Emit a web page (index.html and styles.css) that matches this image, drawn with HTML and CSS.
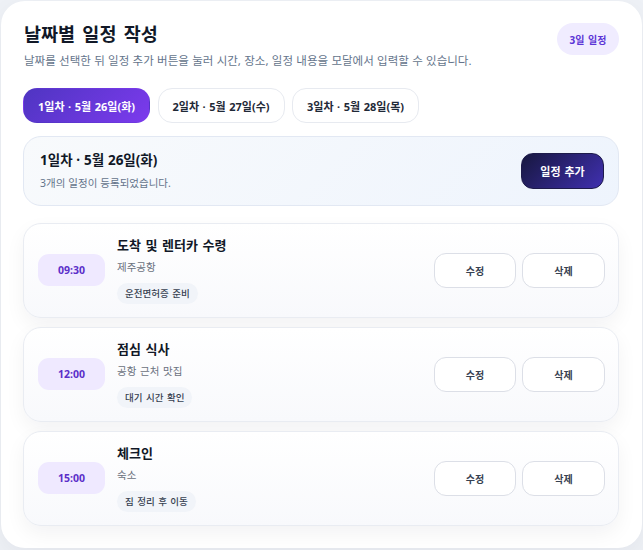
FILE: index.html
```html
<!DOCTYPE html>
<html lang="ko">
<head>
<meta charset="utf-8">
<title>날짜별 일정 작성</title>
<link rel="stylesheet" href="styles.css">
</head>
<body>
<main class="shell">
  <header class="head">
    <div>
      <h1 class="title">날짜별 일정 작성</h1>
      <p class="sub">날짜를 선택한 뒤 일정 추가 버튼을 눌러 시간, 장소, 일정 내용을 모달에서 입력할 수 있습니다.</p>
    </div>
    <span class="count">3일 일정</span>
  </header>
  <nav class="tabs">
    <button class="tab tab-on">1일차 · 5월 26일(화)</button>
    <button class="tab">2일차 · 5월 27일(수)</button>
    <button class="tab">3일차 · 5월 28일(목)</button>
  </nav>
  <section class="panel">
    <div class="panel-text">
      <h2 class="panel-title">1일차 · 5월 26일(화)</h2>
      <p class="panel-sub">3개의 일정이 등록되었습니다.</p>
    </div>
    <button class="add">일정 추가</button>
  </section>
  <section class="list">
    <article class="item">
      <div class="time">09:30</div>
      <div class="info">
        <h3 class="name">도착 및 렌터카 수령</h3>
        <p class="place">제주공항</p>
        <span class="memo">운전면허증 준비</span>
      </div>
      <div class="acts"><button class="act">수정</button><button class="act act-del">삭제</button></div>
    </article>
    <article class="item">
      <div class="time">12:00</div>
      <div class="info">
        <h3 class="name">점심 식사</h3>
        <p class="place">공항 근처 맛집</p>
        <span class="memo">대기 시간 확인</span>
      </div>
      <div class="acts"><button class="act">수정</button><button class="act act-del">삭제</button></div>
    </article>
    <article class="item">
      <div class="time">15:00</div>
      <div class="info">
        <h3 class="name">체크인</h3>
        <p class="place">숙소</p>
        <span class="memo">짐 정리 후 이동</span>
      </div>
      <div class="acts"><button class="act">수정</button><button class="act act-del">삭제</button></div>
    </article>
  </section>
</main>
</body>
</html>
```
FILE: styles.css
```css
* { box-sizing: border-box; }
html, body { margin: 0; height: 100%; overflow: hidden; }
body {
  background: #eef1f6;
  font-family: "Noto Sans", "Noto Sans CJK KR", sans-serif;
  color: #111827;
  padding: 1px;
}
.shell {
  width: 641px;
  height: 547px;
  background: #fff;
  border-radius: 24px;
  padding: 22px 23px 22px 22px;
  box-shadow: 0 8px 24px rgba(15, 23, 42, 0.05);
}
.head { display: flex; justify-content: space-between; align-items: flex-start; }
.title { margin: 0; font-size: 18.5px; line-height: 22px; font-weight: 700; padding-left: 1px; color: #111827; word-spacing: 2.5px; }
.sub { margin: 8px 0 0; font-size: 11.5px; line-height: 16px; color: #64748b; padding-left: 1px; word-spacing: 0.35px; }
.count {
  width: 62px; height: 32px; border-radius: 16px; background: #f0ecff; color: #5b34d6;
  font-size: 10px; font-weight: 700; display: flex; align-items: center; justify-content: center; word-spacing: 1px;
}
.tabs { display: flex; gap: 7.5px; margin-top: 19px; }
.tab {
  height: 35px; padding: 0 14px; border-radius: 14px; border: 1px solid #e7eaf0; background: #fff;
  font: 700 11px "Noto Sans", "Noto Sans CJK KR", sans-serif; color: #1f2937; white-space: nowrap; word-spacing: 0.7px;
}
.tab-on { background: linear-gradient(135deg, #4f35c2, #7c3aed); color: #fff; border-color: transparent; }
.panel {
  margin-top: 13px; height: 70px; border-radius: 18px; border: 1px solid #e2e8f3;
  background: linear-gradient(135deg, #f8fafc, #eef4fd);
  display: flex; justify-content: space-between; align-items: center; padding: 0 14px 0 16px;
}
.panel-text { margin-bottom: 2px; }
.panel-title { margin: 0; font-size: 13.5px; line-height: 18px; font-weight: 700; word-spacing: 0.3px; }
.panel-sub { margin: 7px 0 0; font-size: 10.5px; line-height: 14px; color: #64748b; word-spacing: 0.3px; }
.add {
  width: 83px; height: 36px; border-radius: 12px; border: 1px solid #1e1b4b;
  background: linear-gradient(135deg, #17173f, #4030b0); color: #fff;
  font: 700 11px "Noto Sans", "Noto Sans CJK KR", sans-serif; word-spacing: 1px;
}
.list { margin-top: 17px; display: flex; flex-direction: column; gap: 9px; }
.item {
  height: 95px; border-radius: 18px; border: 1px solid #e9ecf2;
  background: linear-gradient(180deg, #fff, #f8f9fc);
  box-shadow: 0 8px 20px rgba(15, 23, 42, 0.05);
  display: flex; align-items: center; padding: 0 13px 0 14px;
}
.time {
  width: 67px; height: 32px; margin-bottom: 2px; border-radius: 11px; background: #efe9ff; color: #5b2fc9;
  font-size: 10.5px; font-weight: 700; display: flex; align-items: center; justify-content: center;
}
.info { margin-left: 12px; flex: 1; padding-bottom: 2px; }
.name { margin: 0; font-size: 13px; line-height: 18px; font-weight: 700; color: #111827; word-spacing: 1.2px; }
.place { margin: 6px 0 0; font-size: 10.5px; line-height: 14px; color: #6b7280; word-spacing: 1px; }
.memo {
  display: inline-block; margin-top: 9px; height: 21px; line-height: 21px; padding: 0 8px;
  border-radius: 11px; background: #f1f4f9; color: #374151; font-size: 9.5px; font-weight: 500; word-spacing: 1px;
}
.acts { display: flex; gap: 6px; }
.act {
  width: 82px; height: 35px; border-radius: 12px; border: 1px solid #dcdfe7; background: #fff;
  font: 700 10px "Noto Sans", "Noto Sans CJK KR", sans-serif; color: #374151;
}
.act-del { width: 83px; }
```
